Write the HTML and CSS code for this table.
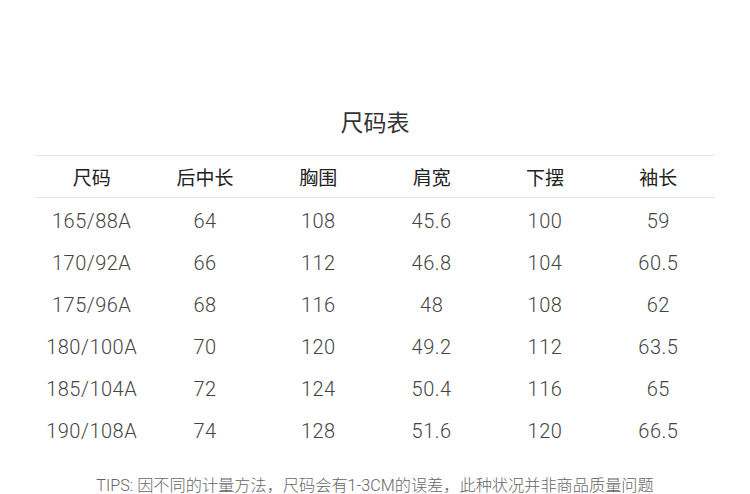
FILE: index.html
```html
<!DOCTYPE html>
<html lang="zh">
<head>
<meta charset="utf-8">
<link rel="stylesheet" href="styles.css">
</head>
<body>
<div class="page">
  <h1 class="title">尺码表</h1>
  <table class="size-table">
    <thead>
      <tr><th>尺码</th><th>后中长</th><th>胸围</th><th>肩宽</th><th>下摆</th><th>袖长</th></tr>
    </thead>
    <tbody>
      <tr><td>165/88A</td><td>64</td><td>108</td><td>45.6</td><td>100</td><td>59</td></tr>
      <tr><td>170/92A</td><td>66</td><td>112</td><td>46.8</td><td>104</td><td>60.5</td></tr>
      <tr><td>175/96A</td><td>68</td><td>116</td><td>48</td><td>108</td><td>62</td></tr>
      <tr><td>180/100A</td><td>70</td><td>120</td><td>49.2</td><td>112</td><td>63.5</td></tr>
      <tr><td>185/104A</td><td>72</td><td>124</td><td>50.4</td><td>116</td><td>65</td></tr>
      <tr><td>190/108A</td><td>74</td><td>128</td><td>51.6</td><td>120</td><td>66.5</td></tr>
    </tbody>
  </table>
  <p class="tips">TIPS: 因不同的计量方法，尺码会有1-3CM的误差，此种状况并非商品质量问题</p>
</div>
</body>
</html>
```
FILE: styles.css
```css
html, body {
  margin: 0;
  padding: 0;
  background: #fff;
}
.page {
  width: 750px;
  height: 494px;
  overflow: hidden;
  font-family: "Noto Sans CJK SC", "Noto Sans", sans-serif;
  padding-top: 104px;
  box-sizing: border-box;
}
.title {
  margin: 0;
  height: 34px;
  line-height: 34px;
  text-align: center;
  font-size: 23px;
  font-weight: 400;
  color: #333;
}
.size-table {
  margin: 17px 0 0 35px;
  width: 680px;
  border-collapse: collapse;
  table-layout: fixed;
}
.size-table th {
  height: 41px;
  padding: 0;
  font-size: 19px;
  font-weight: 400;
  color: #222;
  text-align: center;
  border-top: 1px solid #e6e6e6;
  border-bottom: 1px solid #e6e6e6;
}
.size-table td {
  height: 39px;
  padding: 3px 0 0;
  font-family: Roboto, "Noto Sans CJK SC", sans-serif;
  font-size: 20px;
  font-weight: 300;
  letter-spacing: 0.5px;
  color: #444;
  text-align: center;
}
.tips {
  margin: 22px 0 0;
  text-align: center;
  font-family: Roboto, "Noto Sans CJK SC", sans-serif;
  font-size: 16.2px;
  color: #666;
  font-weight: 300;
}
```
